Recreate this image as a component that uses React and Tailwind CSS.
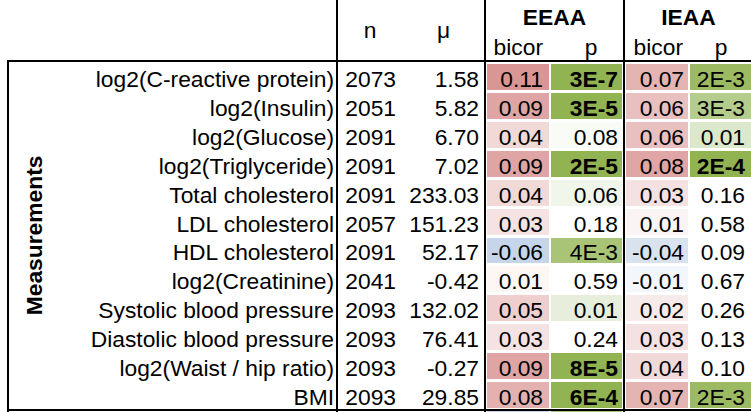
import React from "react";

const rows = [
  { label: "log2(C-reactive protein)", n: "2073", mu: "1.58", eb: "0.11", ebc: "bg-[#d99694]", ep: "3E-7", epc: "bg-[#92b352]", epb: true, ib: "0.07", ibc: "bg-[#e4b4b3]", ip: "2E-3", ipc: "bg-[#9bba62]", ipb: false },
  { label: "log2(Insulin)", n: "2051", mu: "5.82", eb: "0.09", ebc: "bg-[#dfa5a4]", ep: "3E-5", epc: "bg-[#92b352]", epb: true, ib: "0.06", ibc: "bg-[#e8c0bf]", ip: "3E-3", ipc: "bg-[#b5cd8c]", ipb: false },
  { label: "log2(Glucose)", n: "2091", mu: "6.70", eb: "0.04", ebc: "bg-[#f1d9d8]", ep: "0.08", epc: "bg-[#f9fbf6]", epb: false, ib: "0.06", ibc: "bg-[#e8c0bf]", ip: "0.01", ipc: "bg-[#dce8cb]", ipb: false },
  { label: "log2(Triglyceride)", n: "2091", mu: "7.02", eb: "0.09", ebc: "bg-[#dfa5a4]", ep: "2E-5", epc: "bg-[#92b352]", epb: true, ib: "0.08", ibc: "bg-[#dfa6a5]", ip: "2E-4", ipc: "bg-[#92b352]", ipb: true },
  { label: "Total cholesterol", n: "2091", mu: "233.03", eb: "0.04", ebc: "bg-[#f1d9d8]", ep: "0.06", epc: "bg-[#f1f6ea]", epb: false, ib: "0.03", ibc: "bg-[#f4e1e1]", ip: "0.16", ipc: "bg-white", ipb: false },
  { label: "LDL cholesterol", n: "2057", mu: "151.23", eb: "0.03", ebc: "bg-[#f5e2e2]", ep: "0.18", epc: "bg-white", epb: false, ib: "0.01", ibc: "bg-[#fbf4f4]", ip: "0.58", ipc: "bg-white", ipb: false },
  { label: "HDL cholesterol", n: "2091", mu: "52.17", eb: "-0.06", ebc: "bg-[#c6d5e9]", ep: "4E-3", epc: "bg-[#a9c476]", epb: false, ib: "-0.04", ibc: "bg-[#d9e3f0]", ip: "0.09", ipc: "bg-white", ipb: false },
  { label: "log2(Creatinine)", n: "2041", mu: "-0.42", eb: "0.01", ebc: "bg-[#fcf6f5]", ep: "0.59", epc: "bg-white", epb: false, ib: "-0.01", ibc: "bg-[#f3f6fa]", ip: "0.67", ipc: "bg-white", ipb: false },
  { label: "Systolic blood pressure", n: "2093", mu: "132.02", eb: "0.05", ebc: "bg-[#eecfce]", ep: "0.01", epc: "bg-[#e7efdc]", epb: false, ib: "0.02", ibc: "bg-[#f7eaea]", ip: "0.26", ipc: "bg-white", ipb: false },
  { label: "Diastolic blood pressure", n: "2093", mu: "76.41", eb: "0.03", ebc: "bg-[#f5e2e2]", ep: "0.24", epc: "bg-white", epb: false, ib: "0.03", ibc: "bg-[#f4e1e1]", ip: "0.13", ipc: "bg-white", ipb: false },
  { label: "log2(Waist / hip ratio)", n: "2093", mu: "-0.27", eb: "0.09", ebc: "bg-[#dfa5a4]", ep: "8E-5", epc: "bg-[#92b352]", epb: true, ib: "0.04", ibc: "bg-[#f0d9d8]", ip: "0.10", ipc: "bg-white", ipb: false },
  { label: "BMI", n: "2093", mu: "29.85", eb: "0.08", ebc: "bg-[#e3b1b0]", ep: "6E-4", epc: "bg-[#92b352]", epb: true, ib: "0.07", ibc: "bg-[#e4b4b3]", ip: "2E-3", ipc: "bg-[#9bba62]", ipb: false },
];

function VLine() {
  return <div className="w-[2px] shrink-0 bg-black" />;
}

function Cell({ className, children }) {
  return (
    <div className={`shrink-0 mt-[2px] mb-[1px] flex items-end justify-end ${className}`}>
      <span>{children}</span>
    </div>
  );
}

function Row({ r }) {
  return (
    <div className="flex-1 flex min-h-0">
      <div className="w-[276px] shrink-0 flex items-end justify-end pr-[2px] pb-[1px] whitespace-nowrap">
        {r.label}
      </div>
      <VLine />
      <Cell className="w-[64px] pr-[6px]">{r.n}</Cell>
      <div className="w-[1px] shrink-0" />
      <Cell className="w-[81px] pr-[5px]">{r.mu}</Cell>
      <VLine />
      <div className="w-[1px] shrink-0" />
      <Cell className={`w-[62px] pr-[6px] ${r.ebc}`}>{r.eb}</Cell>
      <div className="w-[2px] shrink-0" />
      <Cell className={`w-[71px] pr-[4px] ${r.epc} ${r.epb ? "font-bold" : ""}`}>{r.ep}</Cell>
      <div className="w-[1px] shrink-0" />
      <VLine />
      <div className="w-[1px] shrink-0" />
      <Cell className={`w-[62px] pr-[4px] ${r.ibc}`}>{r.ib}</Cell>
      <div className="w-[2px] shrink-0" />
      <Cell className={`w-[62px] pr-[7px] ${r.ipc} ${r.ipb ? "font-bold" : ""}`}>{r.ip}</Cell>
    </div>
  );
}

export default function App() {
  return (
    <div className="w-[751px] h-[412px] overflow-hidden bg-white text-black font-['Liberation_Sans',Arial,sans-serif] text-[22.8px] leading-[22px] flex flex-col">
      {/* header */}
      <div className="h-[60px] shrink-0 flex">
        <div className="w-[336px] shrink-0" />
        <VLine />
        <div className="w-[64px] shrink-0 flex items-center justify-center">n</div>
        <div className="w-[1px] shrink-0" />
        <div className="w-[81px] shrink-0 flex items-center justify-center">μ</div>
        <VLine />
        <div className="w-[137px] shrink-0 flex flex-col pt-[6px]">
          <div className="h-[22px] text-center font-bold">EEAA</div>
          <div className="mt-[8px] h-[22px] flex">
            <div className="ml-[1px] w-[62px] shrink-0 text-right pr-[6px]">bicor</div>
            <div className="ml-[2px] w-[71px] shrink-0 text-center pl-[9px]">p</div>
          </div>
        </div>
        <VLine />
        <div className="w-[127px] shrink-0 flex flex-col pt-[6px]">
          <div className="h-[22px] text-center font-bold">IEAA</div>
          <div className="mt-[8px] h-[22px] flex">
            <div className="ml-[1px] w-[62px] shrink-0 text-right pr-[5px]">bicor</div>
            <div className="ml-[2px] w-[62px] shrink-0 text-center">p</div>
          </div>
        </div>
      </div>
      <div className="h-[2px] shrink-0 ml-[7px] bg-black" />
      {/* body */}
      <div className="h-[347px] shrink-0 flex">
        <div className="w-[2px] shrink-0 ml-[7px] bg-black" />
        <div className="w-[51px] shrink-0 flex items-center justify-center">
          <span className="-rotate-90 font-bold whitespace-nowrap leading-none">Measurements</span>
        </div>
        <div className="w-[692px] shrink-0 flex flex-col">
          {rows.map((r) => (
            <Row key={r.label} r={r} />
          ))}
        </div>
      </div>
      <div className="h-[2px] shrink-0 ml-[7px] bg-black" />
      {/* next row, cut off */}
      <div className="h-[20px] shrink-0 flex">
        <div className="w-[2px] shrink-0 ml-[7px] bg-black" />
        <div className="w-[327px] shrink-0" />
        <VLine />
        <div className="w-[146px] shrink-0" />
        <VLine />
        <div className="w-[1px] shrink-0" />
        <div className="w-[62px] shrink-0 bg-[#c6d5e9]" />
        <div className="w-[2px] shrink-0" />
        <div className="w-[71px] shrink-0 bg-[#a9c476]" />
        <div className="w-[1px] shrink-0" />
        <VLine />
      </div>
    </div>
  );
}
